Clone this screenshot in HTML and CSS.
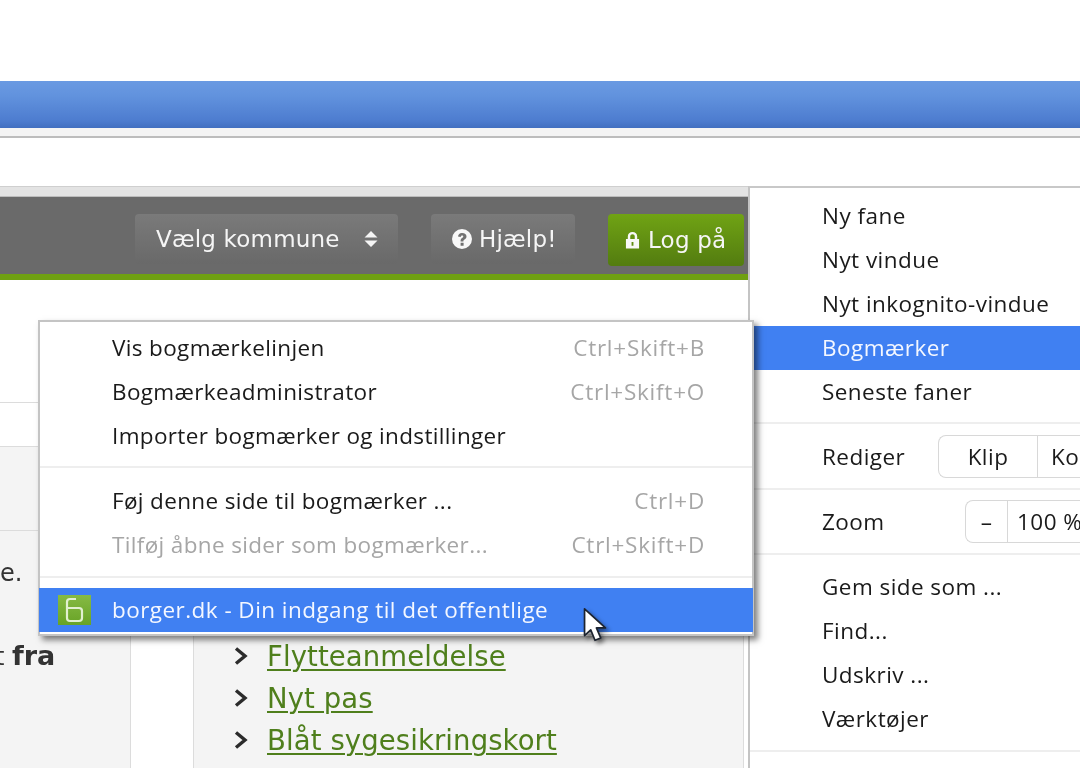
FILE: index.html
```html
<!DOCTYPE html>
<html lang="da">
<head>
<meta charset="utf-8">
<title>borger.dk</title>
<link rel="stylesheet" href="styles.css">
</head>
<body>
<div class="stage">
  <div class="blank"></div>
  <div class="titlebar"></div>
  <div class="strip"></div>
  <div class="addr"></div>
  <div class="tabline"></div>

  <div class="site">
    <header class="site-head">
      <button class="btn btn-wide">Vælg kommune
        <svg class="i-sort" viewBox="0 0 14 16"><path d="M7 0l6.5 6.6H.5zM7 16L.5 9.4h13z"/></svg>
      </button>
      <button class="btn btn-help">
        <svg class="i-help" viewBox="0 0 20 20"><path fill-rule="evenodd" d="M10 0a10 10 0 1 1 0 20a10 10 0 0 1 0-20zM8.6 13.8v3h3v-3zM6 7.4l2.6.7c.2-1 .7-1.6 1.5-1.6c.8 0 1.2.4 1.2 1c0 .5-.4.9-1.2 1.5c-1.1.8-1.6 1.6-1.5 3.5h2.8c0-1 .3-1.4 1.1-2c1.2-.9 2-1.7 2-3.1c0-2-1.7-3.3-4.3-3.3C7.8 3.9 6.4 5.200 6 7.4z"/></svg>
        Hjælp!
      </button>
      <button class="btn btn-login">
        <svg class="i-lock" viewBox="0 0 16 18"><path fill-rule="evenodd" d="M3 8V5.200C3 2.300 5.100.5 8 .5s5 1.800 5 4.700V8h2v10H1V8zM5.600 8h4.800V5.200C10.400 3.700 9.400 2.900 8 2.900s-2.400.8-2.400 2.300zM7 11v4h2v-4z"/></svg>
        Log på
      </button>
    </header>
    <div class="band band-a"></div>
    <div class="band band-b"></div>
    <div class="band band-c"></div>
    <div class="columns">
      <div class="col-left">
        <p class="frag">e.</p>
        <p class="frag frag-b">t <b>fra</b></p>
      </div>
      <div class="col-mid"></div>
      <div class="col-main">
        <ul class="links">
          <li><svg class="chev" viewBox="0 0 14 18"><path d="M2 1.500l9 7.500l-9 7.500"/></svg><a href="#">Flytteanmeldelse</a></li>
          <li><svg class="chev" viewBox="0 0 14 18"><path d="M2 1.500l9 7.500l-9 7.500"/></svg><a href="#">Nyt pas</a></li>
          <li><svg class="chev" viewBox="0 0 14 18"><path d="M2 1.500l9 7.500l-9 7.500"/></svg><a href="#">Blåt sygesikringskort</a></li>
        </ul>
      </div>
    </div>
  </div>

  <nav class="menu-main">
    <div class="group g-first">
      <div class="item">Ny fane</div>
      <div class="item">Nyt vindue</div>
      <div class="item">Nyt inkognito-vindue</div>
      <div class="item active">Bogmærker</div>
      <div class="item">Seneste faner</div>
    </div>
    <div class="row row-edit">
      <span class="row-label">Rediger</span>
      <div class="seg"><span class="seg-klip">Klip</span><span class="seg-ko">Kopiér</span></div>
    </div>
    <div class="row row-zoom">
      <span class="row-label">Zoom</span>
      <div class="seg"><span class="seg-minus">–</span><span class="seg-pct">100 %</span></div>
    </div>
    <div class="group g-last">
      <div class="item">Gem side som ...</div>
      <div class="item">Find...</div>
      <div class="item">Udskriv ...</div>
      <div class="item">Værktøjer</div>
    </div>
  </nav>

  <nav class="menu-sub">
    <div class="sub-a">
      <div class="sitem"><span>Vis bogmærkelinjen</span><kbd>Ctrl+Skift+B</kbd></div>
      <div class="sitem"><span>Bogmærkeadministrator</span><kbd>Ctrl+Skift+O</kbd></div>
      <div class="sitem"><span>Importer bogmærker og indstillinger</span></div>
    </div>
    <div class="sub-b">
      <div class="sitem"><span>Føj denne side til bogmærker ...</span><kbd>Ctrl+D</kbd></div>
      <div class="sitem dim"><span>Tilføj åbne sider som bogmærker...</span><kbd>Ctrl+Skift+D</kbd></div>
    </div>
    <div class="sub-c">
      <div class="sitem active fav-item">
        <svg class="fav" viewBox="0 0 33 30">
          <defs><linearGradient id="favg" x1="0" y1="0" x2="0" y2="1"><stop offset="0" stop-color="#86ba44"/><stop offset="1" stop-color="#68a326"/></linearGradient></defs>
          <rect width="33" height="30" fill="url(#favg)"/>
          <path d="M9 23V7q0-3 3-3h6M9 13h12q3 0 3 3v7q0 3-3 3H12q-3 0-3-3" fill="none" stroke="#e2f0d0" stroke-width="2.200"/>
        </svg>
        <span>borger.dk - Din indgang til det offentlige</span>
      </div>
    </div>
  </nav>

  <svg class="cursor" viewBox="0 0 26 40">
    <path d="M2 1v28l6.500-6 4.500 11 6-2.500-4.500-10.500h9.500z" fill="#fff" stroke="#1d2430" stroke-width="1.800" stroke-linejoin="round"/>
  </svg>
</div>
</body>
</html>
```
FILE: styles.css
```css
* { box-sizing: border-box; }
html, body { margin: 0; padding: 0; background: #fff; }
.stage {
  position: relative;
  width: 1080px;
  height: 768px;
  overflow: hidden;
  background: #fff;
  filter: blur(0.45px);
}
.blank { height: 81px; }
.titlebar {
  height: 47px;
  background: linear-gradient(#6a9ae2 0, #6293de 30%, #4d7ccf 85%, #426fc0 100%);
}
.strip { height: 10px; background: #f4f4f4; border-bottom: 2px solid #bdbdbd; }
.addr { height: 48px; }
.tabline { height: 11px; background: #e3e3e3; border-top: 1px solid #cfcfcf; border-bottom: 1px solid #bcbcbc; }

.site { width: 749px; font-family: "DejaVu Sans", Verdana, sans-serif; }
.site-head {
  height: 83px;
  background: #6a6a6a;
  border-bottom: 6px solid #6fa012;
  display: flex;
  justify-content: flex-end;
  gap: 33px;
  padding: 17px 5px 0 0;
}
.btn {
  height: 50px;
  border: 0;
  border-radius: 4px;
  color: #f5f5f5;
  font: 23px "DejaVu Sans", Verdana, sans-serif;
  letter-spacing: .2px;
  background: linear-gradient(#7a7a7a, #696969);
  display: flex;
  align-items: center;
  padding: 0;
  white-space: nowrap;
}
.btn-wide { width: 263px; padding-left: 21px; gap: 24px; }
.btn-help { width: 144px; padding-left: 21px; gap: 7px; }
.btn-login { width: 136px; height: 52px; padding-left: 17px; gap: 8px; background: linear-gradient(#70a314, #537c10); }
.i-sort { width: 14px; height: 16px; fill: #f5f5f5; }
.i-help { width: 20px; height: 20px; fill: #f8f8f8; }
.i-lock { width: 15px; height: 18px; fill: #f8f8f8; }

.band { border-bottom: 1px solid #dcdcdc; }
.band-a { height: 123px; }
.band-b { height: 44px; }
.band-c { height: 84px; background: #f4f4f4; }

.columns { display: flex; height: 237px; }
.col-left { width: 131px; background: #f4f4f4; border-right: 1px solid #dcdcdc; color: #333; font-size: 24px; overflow: hidden; padding-top: 27px; }
.col-mid { width: 62px; background: #fff; }
.col-main { width: 551px; background: #f4f4f4; border-left: 1px solid #dcdcdc; border-right: 1px solid #dcdcdc; padding-top: 104px; }
.frag { margin: 0; white-space: nowrap; line-height: 30px; }
.frag-b { margin: 53px 0 0 -5px; }
.frag-b b { font-size: 27px; }
.links { list-style: none; margin: 0; padding: 0 0 0 40px; font-size: 27.5px; letter-spacing: .1px; }
.links li { display: flex; align-items: center; height: 42px; gap: 19px; }
.links a { color: #4f7f1c; text-decoration: underline; text-decoration-thickness: 2px; text-underline-offset: 3px; }
.chev { width: 14px; height: 18px; flex: none; fill: none; stroke: #2b2b2b; stroke-width: 3.4; }

.menu-main, .menu-sub { font-family: "Open Sans", "Noto Sans", sans-serif; font-size: 22.5px; letter-spacing: .45px; color: #1a1a1a; }
.menu-main {
  position: absolute;
  left: 748px;
  top: 186px;
  width: 480px;
  height: 600px;
  background: #fff;
  border-left: 2px solid #c4c4c4;
  border-top: 2px solid #c8c8c8;
}
.group, .row { border-bottom: 2px solid #eeeeee; }
.g-first { padding: 6px 0 8px; }
.g-last { padding: 10px 0 9px; }
.item { height: 44px; line-height: 44px; padding-left: 72px; white-space: nowrap; }
.item.active { background: #4080f2; color: #f4f7ff; }
.row { display: flex; align-items: center; padding-left: 72px; white-space: nowrap; }
.row-edit { height: 66px; }
.row-zoom { height: 65px; }
.row-label { flex: none; }
.row-edit .row-label { width: 116px; }
.row-zoom .row-label { width: 143px; }
.seg { display: flex; width: 300px; height: 43px; border: 1px solid #d8d8d8; border-radius: 8px 0 0 8px; border-right: 0; line-height: 41px; }
.seg-klip { width: 99px; text-align: center; border-right: 1px solid #d8d8d8; }
.seg-ko { padding-left: 13px; }
.seg-minus { width: 42px; text-align: center; border-right: 1px solid #d8d8d8; }
.seg-pct { padding-left: 9px; }

.menu-sub {
  position: absolute;
  left: 38px;
  top: 320px;
  width: 716px;
  height: 316px;
  background: #fff;
  border: 2px solid #c4c4c4;
  box-shadow: 4px 4px 6px rgba(0, 0, 0, .5);
  padding: 4px 0 0;
}
.sub-a, .sub-b { border-bottom: 2px solid #eeeeee; padding-bottom: 8px; letter-spacing: .35px; }
.sub-b { padding-top: 11px; padding-bottom: 9px; }
.sub-c { padding-top: 10px; }
.sitem { display: flex; justify-content: space-between; align-items: center; height: 44px; padding: 0 47px 2px 72px; white-space: nowrap; }
.sitem kbd { font: inherit; letter-spacing: .75px; color: #a6a6a6; }
.dim { color: #a6a6a6; }
.sitem.active { background: #4080f2; color: #f4f7ff; }
.fav-item { justify-content: flex-start; margin: 0 -1px; padding: 0 0 0 19px; gap: 21px; }
.fav-item span { padding-bottom: 2px; }
.fav { width: 33px; height: 30px; flex: none; }

.cursor { position: absolute; left: 582px; top: 608px; width: 26px; height: 38px; filter: drop-shadow(3px 3px 2px rgba(0, 0, 0, .45)); }
```
